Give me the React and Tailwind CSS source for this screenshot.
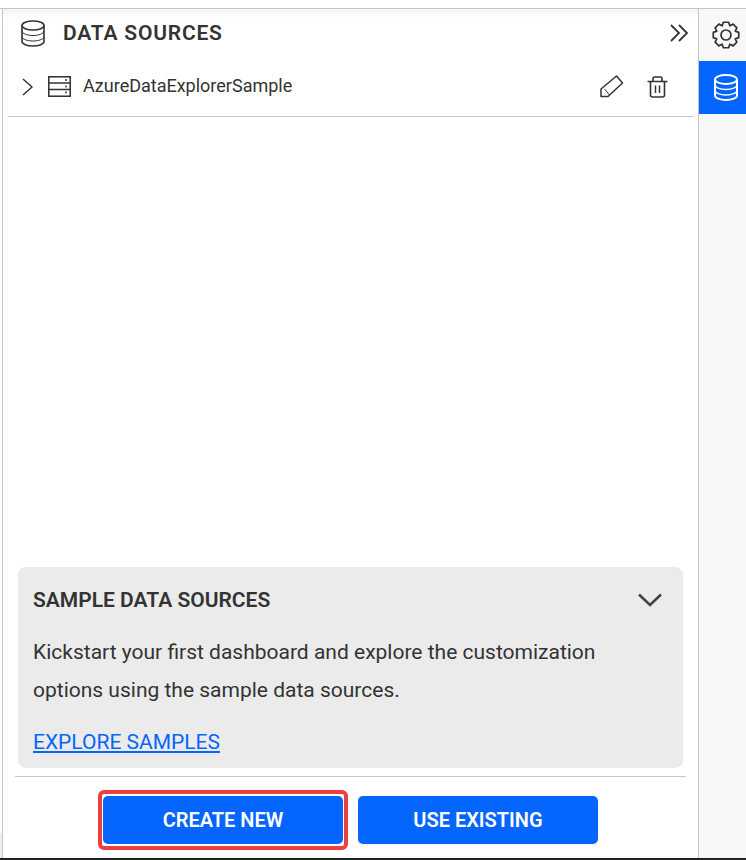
import React from 'react';

const DbIcon = ({ color = '#333', sw = 1.6, inner = 1 }) => (
  <svg width="24" height="27" viewBox="0 0 24 27" fill="none" stroke={color} strokeWidth={sw}>
    <ellipse cx="12" cy="5.500" rx="11" ry="4.500" />
    <path d="M1 5.500v16c0 2.500 5 4.500 11 4.500s11-2 11-4.500v-16" />
    <path d="M1 11c0 2.500 5 4.500 11 4.500S23 13.500 23 11M1 16.500c0 2.500 5 4.500 11 4.500s11-2 11-4.500" strokeWidth={inner} />
  </svg>
);

const ServerIcon = () => (
  <svg width="23" height="21" viewBox="0 0 23 21" fill="none" stroke="#333" strokeWidth="1.600">
    <rect x="0.750" y="0.750" width="21.500" height="19.500" />
    <path d="M0.750 7h21.500M0.750 13.500h21.500" />
    <path d="M18 3v2M18 9.500v2M18 15.500v2" strokeWidth="1.400" />
  </svg>
);

const gearPath = () => {
  const teeth = 8;
  const step = (2 * Math.PI) / teeth;
  const pts = [];
  for (let i = 0; i < teeth; i++) {
    const a = i * step;
    [[10, -0.5], [13, -0.26], [13, 0.26], [10, 0.5]].forEach(([r, k]) => {
      const t = a + k * step;
      pts.push(`${(14 + r * Math.cos(t)).toFixed(2)} ${(14 + r * Math.sin(t)).toFixed(2)}`);
    });
  }
  return `M${pts.join('L')}Z`;
};

const GearIcon = () => (
  <svg width="28" height="28" viewBox="0 0 28 28" fill="none" stroke="#333" strokeWidth="1.700" strokeLinejoin="round">
    <path d={gearPath()} />
    <circle cx="14" cy="14" r="5" />
  </svg>
);

const PencilIcon = () => (
  <svg width="24" height="23" viewBox="0 0 24 23" fill="none" stroke="#333" strokeWidth="1.500" strokeLinejoin="round">
    <path d="M1 14L16.500 1L22.500 8L8 21.500H1Z" />
    <path d="M4.500 14L9.500 20" strokeWidth="1" />
  </svg>
);

const TrashIcon = () => (
  <svg width="21" height="22" viewBox="0 0 21 22" fill="none" stroke="#333" strokeWidth="1.600">
    <path d="M0.500 5.500h20M6 5V2.500C6 1.500 6.500 1 7.500 1h6c1 0 1.500.5 1.500 1.500V5" />
    <path d="M3.500 5.500V19c0 1.300.7 2 2 2h10c1.300 0 2-.7 2-2V5.500" />
    <path d="M8.500 9.500v7.500M12.500 9.500v7.500" strokeWidth="1.500" />
  </svg>
);

export default function App() {
  return (
    <div className="h-[860px] w-[746px] flex flex-col overflow-hidden bg-white text-[#333] font-['Roboto',sans-serif]">
      <div className="h-2 shrink-0 bg-white" />
      <div className="flex-1 flex min-h-0 border-t border-[#c4c4c4]">
        {/* Left edge */}
        <div className="w-[2px] shrink-0 flex flex-col">
          <div className="flex-1 bg-white" />
          <div className="h-[25px] bg-[#eeeeee]" />
        </div>
        {/* Main panel */}
        <div className="w-[697px] shrink-0 flex flex-col border-l border-r border-[#c4c4c4] bg-white">
          <div className="flex items-center h-[48px] pl-[18px] pr-[10px] bg-gradient-to-b from-[#f4f4f4] to-white to-[20%]">
            <DbIcon />
            <span className="ml-[18px] mt-[2px] text-[21px] font-semibold tracking-[0.8px] flex-1">DATA SOURCES</span>
            <svg width="18" height="18" viewBox="0 0 18 18" fill="none" stroke="#333" strokeWidth="1.800">
              <path d="M1 1l8 8-8 8M9 1l8 8-8 8" />
            </svg>
          </div>
          <div className="ml-[5px] mr-[4px] h-[60px] border-b border-[#c8c8c8] flex items-center">
            <svg width="11" height="18" viewBox="0 0 11 18" fill="none" stroke="#333" strokeWidth="1.500" className="ml-[14px]">
              <path d="M1 1l9 8-9 8" />
            </svg>
            <div className="ml-[15px]"><ServerIcon /></div>
            <span className="ml-[12px] mb-[2px] text-[18px] flex-1">AzureDataExplorerSample</span>
            <PencilIcon />
            <div className="ml-[23px] mr-[26px]"><TrashIcon /></div>
          </div>
          <div className="flex-1" />
          <div className="ml-[15px] mr-[15px] h-[201px] rounded-lg bg-[#ebebeb] px-[15px] flex flex-col">
            <div className="flex items-center justify-between h-[66px]">
              <span className="mt-[2px] text-[21px] font-semibold">SAMPLE DATA SOURCES</span>
              <svg width="24" height="14" viewBox="0 0 24 14" fill="none" stroke="#444" strokeWidth="2.600" className="mr-[6px]">
                <path d="M1 1.500l11 10.500L23 1.500" />
              </svg>
            </div>
            <p className="text-[21px] leading-[38px]">
              Kickstart your first dashboard and explore the customization<br />options using the sample data sources.
            </p>
            <a className="mt-[21px] text-[21px] leading-[24px] text-[#0565ff] underline">EXPLORE SAMPLES</a>
          </div>
          <div className="mt-2 ml-3 mr-3 border-t border-[#c8c8c8] h-[82px] flex items-center gap-[10px] pl-[83px] pt-[5px]">
            <div className="rounded-md border-4 border-[#ef3e42] px-[1px] py-[2px]">
              <button className="block w-[240px] h-[48px] rounded-[5px] bg-[#0565ff] text-white text-[20px] font-semibold">CREATE NEW</button>
            </div>
            <button className="w-[240px] h-[48px] rounded-[5px] bg-[#0565ff] text-white text-[20px] font-semibold">USE EXISTING</button>
          </div>
        </div>
        {/* Right rail */}
        <div className="flex-1 bg-[#f8f8f8] flex flex-col">
          <div className="h-[52px] flex items-center justify-center pl-[6px] pb-[1px]">
            <GearIcon />
          </div>
          <div className="h-[53px] bg-[#0565ff] flex items-center justify-center pl-[6px]">
            <DbIcon color="#ffffff" sw={2} inner={1.400} />
          </div>
        </div>
      </div>
      <div className="h-[2px] shrink-0 bg-[#1f2321]" />
    </div>
  );
}
